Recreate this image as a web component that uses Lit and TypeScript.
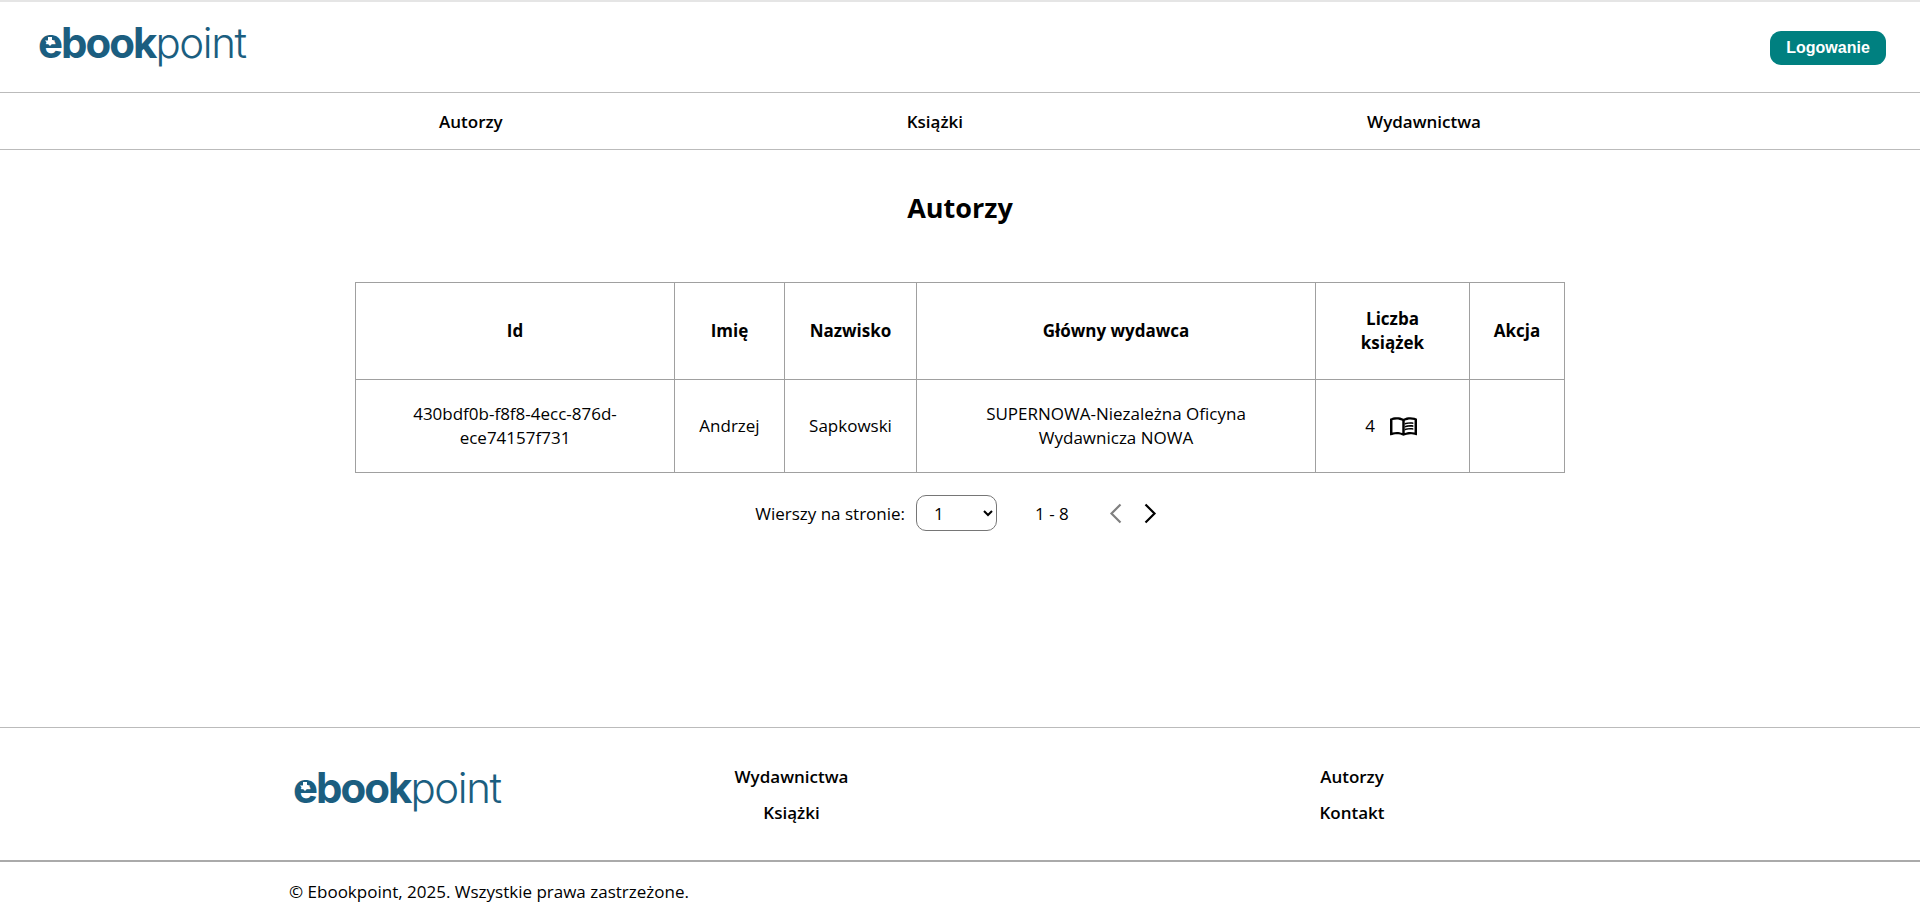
import { LitElement, html, css } from "lit";
import { customElement } from "lit/decorators.js";

@customElement("eb-logo")
class EbLogo extends LitElement {
  static styles = css`
    :host { display: inline-flex; align-items: baseline; color: #1b5e80; font-family: "Inter", "Liberation Sans", sans-serif; font-size: 42px; line-height: 46px; }
    .b { font-weight: 700; letter-spacing: -2px; }
    .l { font-weight: 300; letter-spacing: -1.4px; }
    .e { position: relative; display: inline-block; }
    .e svg { position: absolute; left: 6px; top: 17px; }
  `;
  render() {
    return html`<span class="b"><span class="e">e<svg width="12" height="11" viewBox="0 0 12 11"><rect x="4" y="0" width="4" height="4" fill="#fff"/><path d="M1 3.5H11L6 9Z" fill="#fff"/></svg></span>book</span><span class="l">point</span>`;
  }
}

@customElement("app-root")
class AppRoot extends LitElement {
  static styles = css`
    :host { display: block; font-family: "Open Sans", "Noto Sans", sans-serif; color: #000; font-size: 17px; background: #fff; }
    .top { height: 90px; border-top: 2px solid #e5e5e5; border-bottom: 1px solid #bbb; display: flex; align-items: center; justify-content: space-between; padding: 0 34px 0 38px; }
    .top eb-logo { margin-bottom: 9px; }
    .login { background: #008080; color: #fff; border: 0; border-radius: 11px; width: 116px; height: 34px; margin-top: 2px; font: 700 16px "Liberation Sans", sans-serif; }
    nav { height: 56px; border-bottom: 1px solid #bbb; display: flex; justify-content: space-around; padding: 0 237px; align-items: center; font-weight: 600; }
    h1 { margin: 0; text-align: center; font-size: 27px; font-weight: 700; padding-top: 39px; line-height: 38px; height: 38px; }
    table { border-collapse: collapse; margin: 55px auto 0; width: 1209px; table-layout: fixed; }
    th, td { border: 1px solid #a0a0a0; text-align: center; padding: 0 20px; }
    th { height: 96px; font-weight: 700; line-height: 24px; }
    td { height: 92px; line-height: 24px; }
    td.pub { padding: 0 40px; }
    .cnt { display: inline-flex; align-items: center; gap: 15px; padding-right: 3px; }
    .pag { display: flex; align-items: center; justify-content: center; height: 36px; margin-top: 22px; padding-right: 8px; }
    select { width: 81px; height: 36px; margin-left: 11px; border: 1px solid #767676; border-radius: 10px; background: #fff; color: #000; font: inherit; padding: 0 0 0 13px; }
    .range { margin: 0 40px 0 38px; }
    .chev { display: block; }
    .next { margin-left: 22px; }
    .foot { margin-top: 196px; border-top: 1px solid #bbb; border-bottom: 2px solid #aaa; height: 132px; display: grid; grid-template-columns: 218px 561px 560px; padding-left: 293px; align-items: start; font-weight: 600; }
    .flogo { padding-top: 37px; }
    .col { display: flex; flex-direction: column; align-items: center; gap: 13px; padding-top: 37px; line-height: 23px; }
    .copy { padding: 18px 0 0 289px; line-height: 24px; height: 44px; }
  `;
  render() {
    const chev = (d: string, c: string, cls: string) => html`<svg class="chev ${cls}" width="13" height="21" viewBox="0 0 13 21" fill="none" stroke=${c} stroke-width="2.2"><path d=${d}/></svg>`;
    return html`
      <div class="top"><eb-logo></eb-logo><button class="login">Logowanie</button></div>
      <nav><div>Autorzy</div><div>Książki</div><div>Wydawnictwa</div></nav>
      <h1>Autorzy</h1>
      <table>
        <colgroup><col style="width:319px"><col style="width:110px"><col style="width:132px"><col style="width:399px"><col style="width:154px"><col style="width:95px"></colgroup>
        <thead><tr><th>Id</th><th>Imię</th><th>Nazwisko</th><th>Główny wydawca</th><th>Liczba książek</th><th>Akcja</th></tr></thead>
        <tbody><tr>
          <td>430bdf0b-f8f8-4ecc-876d-ece74157f731</td><td>Andrzej</td><td>Sapkowski</td><td class="pub">SUPERNOWA-Niezależna Oficyna Wydawnicza NOWA</td>
          <td><span class="cnt">4 <svg width="27" height="19" viewBox="1 4.3 22 17.4" preserveAspectRatio="none" fill="#000"><path fill-rule="evenodd" d="M21 5c-1.11-.35-2.33-.5-3.5-.5-1.95 0-4.05.4-5.5 1.5-1.45-1.1-3.55-1.5-5.5-1.5S2.45 4.9 1 6v14.65c0 .25.25.5.5.5.1 0 .15-.05.25-.05C3.1 20.45 5.05 20 6.5 20c1.95 0 4.05.4 5.5 1.5 1.35-.85 3.8-1.5 5.5-1.5 1.65 0 3.35.3 4.75 1.05.1.05.15.05.25.05.25 0 .5-.25.5-.5V6c-.6-.45-1.25-.75-2-1zM21 18.5c-1.1-.35-2.3-.5-3.5-.5-1.5 0-3.2.4-4.5 1V7.8c1.3-.8 3-1.3 4.5-1.3 1.2 0 2.4.15 3.5.5zM3 18.5c1.1-.35 2.3-.5 3.5-.5 1.5 0 3.2.4 4.5 1V7.8c-1.3-.8-3-1.3-4.5-1.3-1.2 0-2.4.15-3.5.5z"/><path d="M17.5 10.5c.88 0 1.73.09 2.5.26V9.24c-.79-.15-1.64-.24-2.5-.24-1.7 0-3.24.29-4.5.83v1.66c1.13-.64 2.7-.99 4.5-.99zM13 12.49v1.66c1.13-.64 2.7-.99 4.5-.99.88 0 1.73.09 2.5.26V11.9c-.79-.15-1.64-.24-2.5-.24-1.7 0-3.24.3-4.5.83zM17.5 14.33c-1.7 0-3.24.29-4.5.83v1.66c1.13-.64 2.7-.99 4.5-.99.88 0 1.73.09 2.5.26v-1.52c-.79-.16-1.64-.24-2.5-.24z"/></svg></span></td><td></td>
        </tr></tbody>
      </table>
      <div class="pag">
        <span>Wierszy na stronie:</span>
        <select><option>1</option><option>2</option><option>5</option></select>
        <span class="range">1 - 8</span>
        ${chev("M11.5 1.5L2.5 10.5L11.5 19.5", "#808080", "")}
        ${chev("M1.5 1.5L10.5 10.5L1.5 19.5", "#000", "next")}
      </div>
      <div class="foot"><div class="flogo"><eb-logo></eb-logo></div><div class="col"><span>Wydawnictwa</span><span>Książki</span></div><div class="col"><span>Autorzy</span><span>Kontakt</span></div></div>
      <div class="copy">© Ebookpoint, 2025. Wszystkie prawa zastrzeżone.</div>`;
  }
}
